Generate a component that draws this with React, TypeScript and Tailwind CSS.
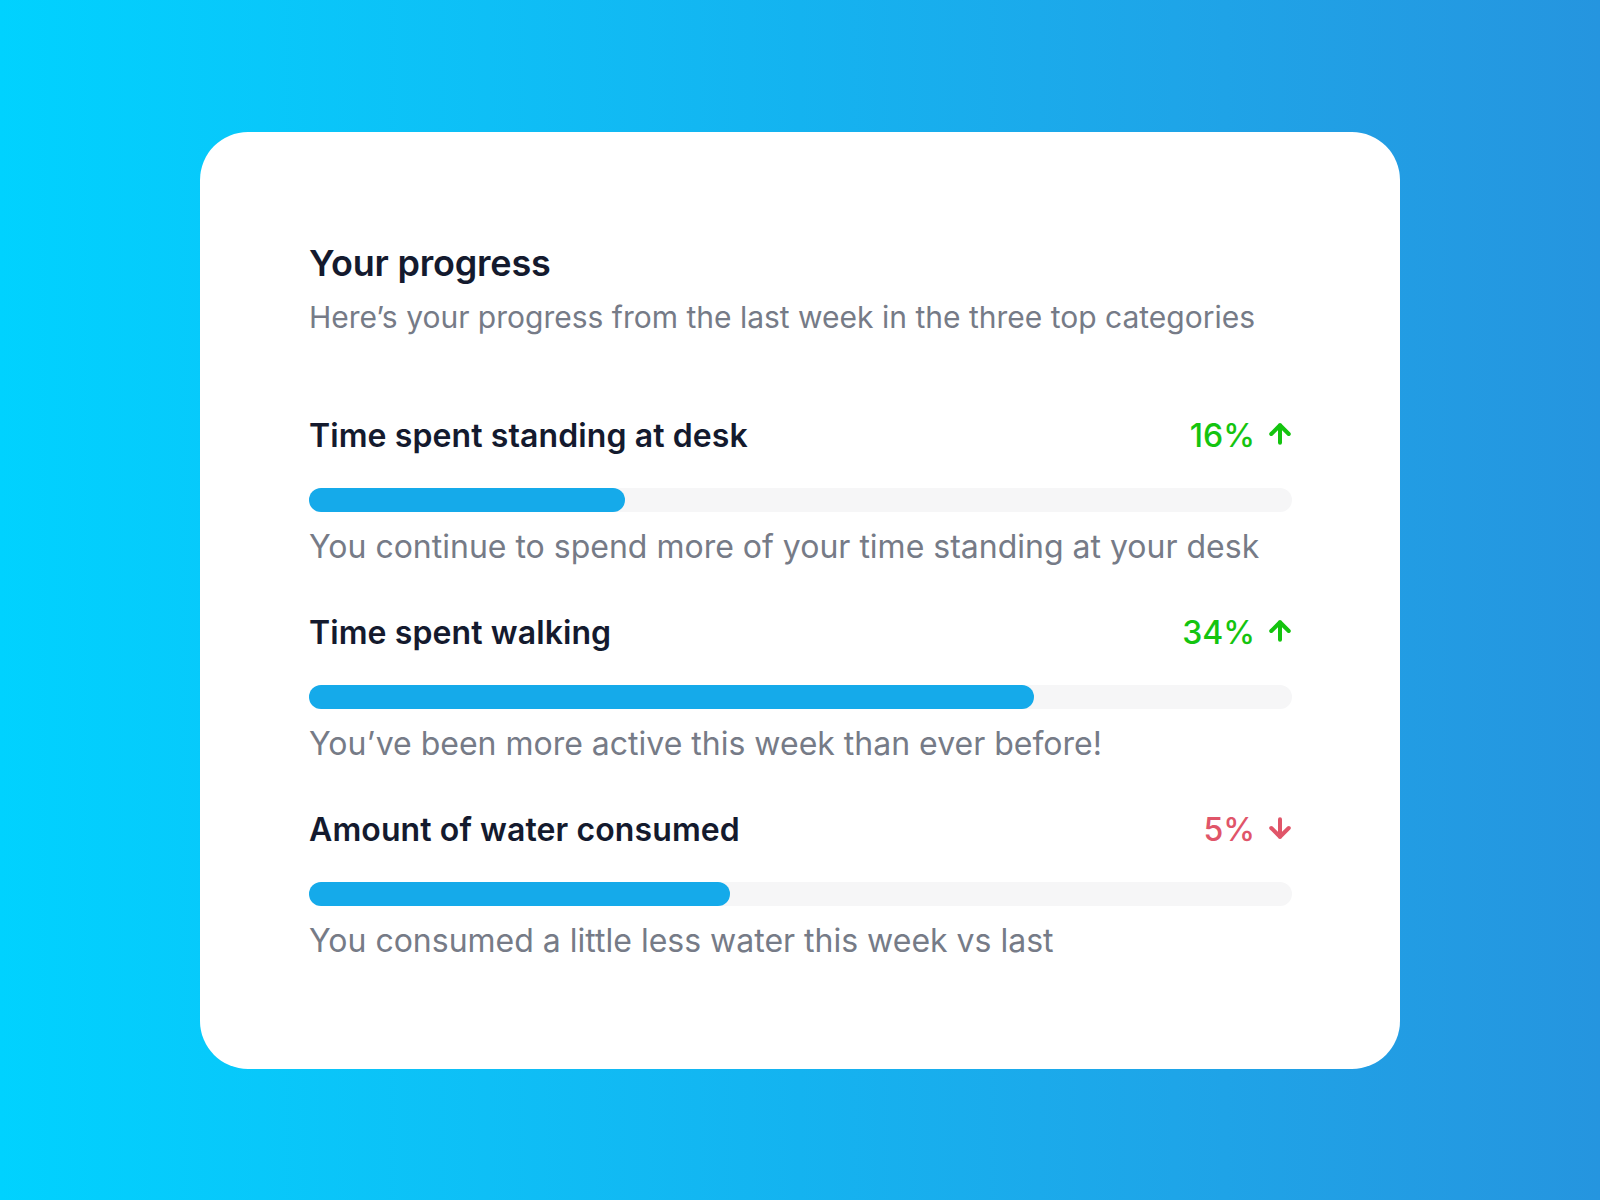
import { ArrowDown, ArrowUp } from "lucide-react";

type Item = {
  title: string;
  value: number;
  fill: number;
  up: boolean;
  note: string;
};

const items: Item[] = [
  {
    title: "Time spent standing at desk",
    value: 16,
    fill: 32.1,
    up: true,
    note: "You continue to spend more of your time standing at your desk",
  },
  {
    title: "Time spent walking",
    value: 34,
    fill: 73.8,
    up: true,
    note: "You’ve been more active this week than ever before!",
  },
  {
    title: "Amount of water consumed",
    value: 5,
    fill: 42.8,
    up: false,
    note: "You consumed a little less water this week vs last",
  },
];

function App() {
  return (
    <div
      className="w-[1600px] h-[1200px] flex items-center justify-center bg-gradient-to-r from-[#00d2ff] via-[#14b3f0] to-[#2595df]"
      style={{ fontFamily: "Inter, 'Noto Sans', sans-serif" }}
    >
      <div className="w-[1200px] h-[937px] bg-white rounded-[48px] pl-[109px] pr-[108px] pt-[109px] flex flex-col">
        <h1 className="text-[36px] leading-[44px] font-semibold text-[#141a2e] tracking-[-0.2px]">
          Your progress
        </h1>
        <p className="mt-[12px] text-[30px] leading-[40px] text-[#767b87]">
          Here’s your progress from the last week in the three top categories
        </p>

        <div className="mt-[79px] flex flex-col gap-[46px]">
          {items.map((item) => (
            <ProgressRow key={item.title} item={item} />
          ))}
        </div>
      </div>
    </div>
  );
}

function ProgressRow({ item }: { item: Item }) {
  const color = item.up ? "text-[#14c40f]" : "text-[#e05569]";
  return (
    <div className="flex flex-col">
      <div className="flex items-center justify-between h-[40px]">
        <span className="text-[32px] font-semibold text-[#141a2e] tracking-[0.1px]">
          {item.title}
        </span>
        <span className={`flex items-center gap-[10px] text-[32px] font-medium ${color}`}>
          {item.value}%
          {item.up ? (
            <ArrowUp size={30} strokeWidth={3.2} className="-mr-[3px] -mt-[4px]" />
          ) : (
            <ArrowDown size={30} strokeWidth={3.2} className="-mr-[3px] -mt-[4px]" />
          )}
        </span>
      </div>
      <div className="mt-[32px] h-[24px] w-full rounded-full bg-[#f6f6f7]">
        <div
          className="h-full rounded-full bg-[#15aaea]"
          style={{ width: `${item.fill}%` }}
        />
      </div>
      <p className="mt-[15px] text-[32px] leading-[40px] text-[#767b87]">
        {item.note}
      </p>
    </div>
  );
}

export default App;
